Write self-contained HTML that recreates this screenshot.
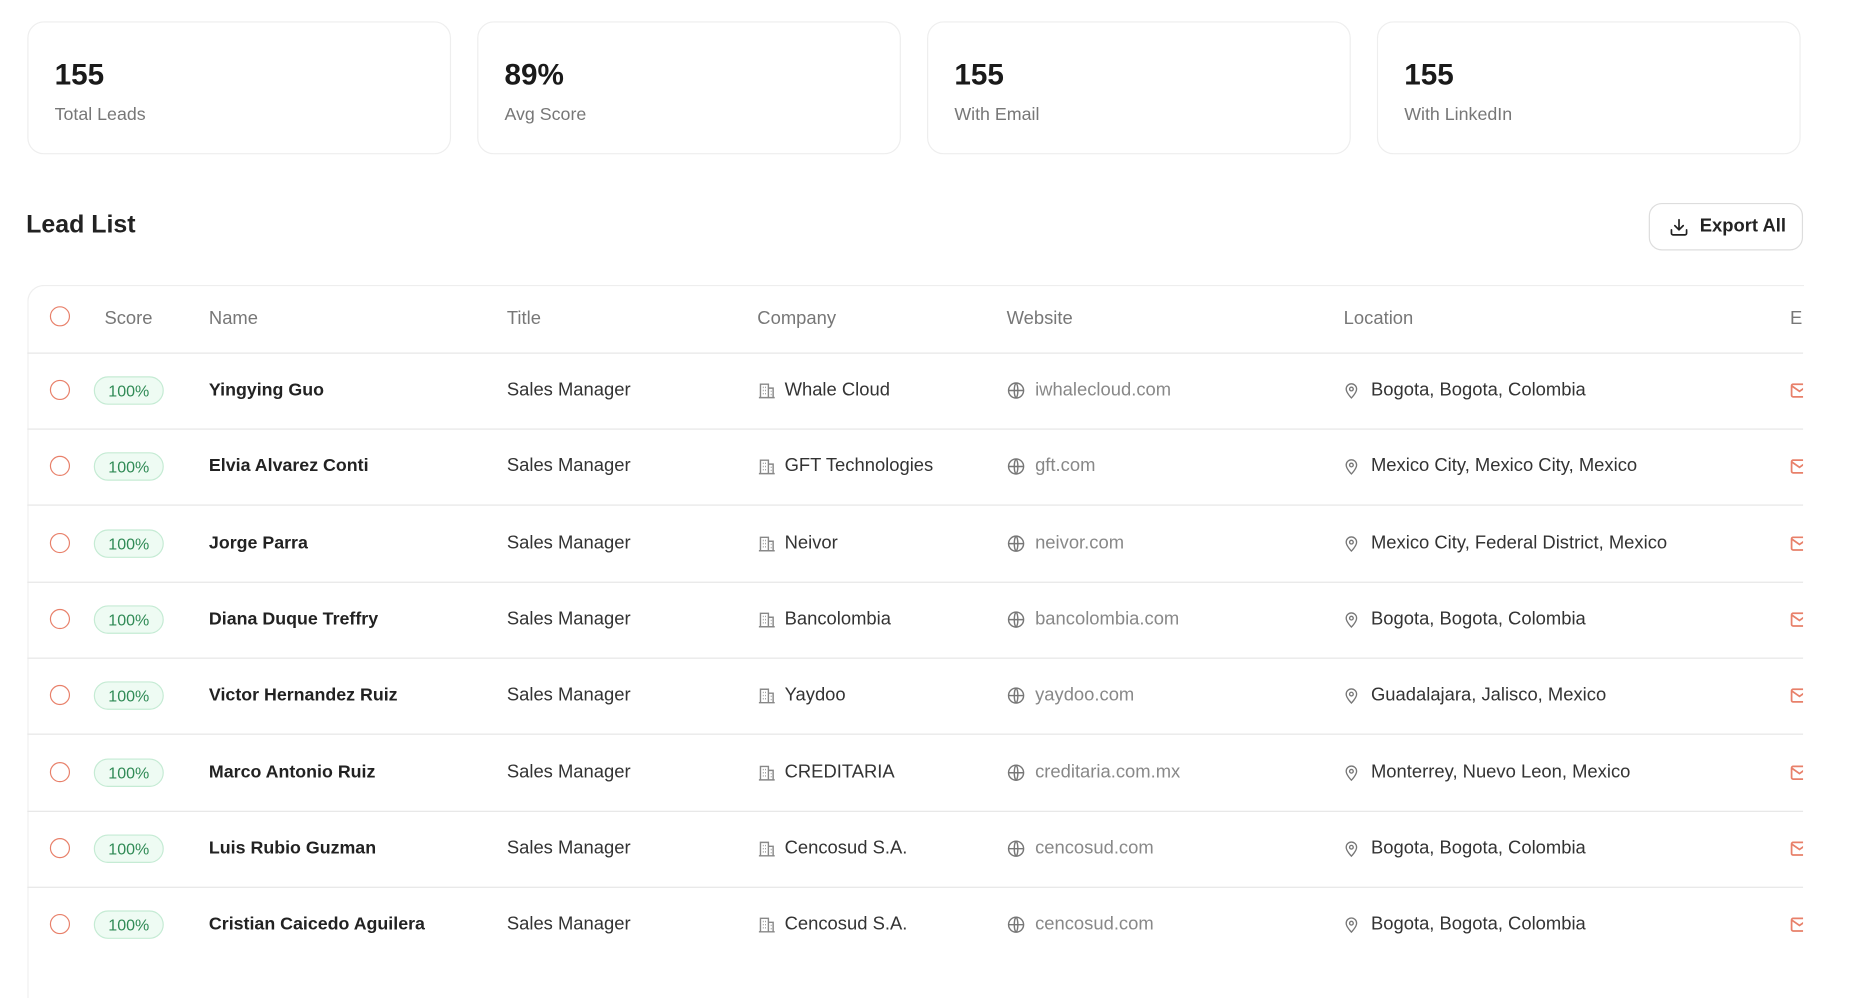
<!DOCTYPE html>
<html><head><meta charset="utf-8"><style>
html,body{margin:0;padding:0;background:#fff;overflow:hidden;width:1858px;height:959px}
#w{position:absolute;left:0;top:0;width:1545px;height:810px;transform:scale(1.187);transform-origin:0 0;font-family:"Liberation Sans",sans-serif;color:#222}
.card{position:absolute;top:18px;height:112px;width:357px;border:1px solid #eee;border-radius:14px;box-sizing:border-box}
.card .n{position:absolute;left:22px;top:44px;font-size:25px;font-weight:600;color:#1a1a1a;line-height:0;}
.card .l{position:absolute;left:22px;top:78px;font-size:15px;color:#777;line-height:0}
.h{position:absolute;left:22px;top:190px;font-size:21px;font-weight:600;line-height:0}
.btn{position:absolute;left:1389px;top:171px;width:130px;height:40px;border:1px solid #ddd;border-radius:11px;box-sizing:border-box;font-size:16px;font-weight:600}
.tbl{position:absolute;left:23px;top:240px;width:1496px;height:600px;border:1px solid #eee;border-right:none;border-bottom:none;border-radius:14px 0 0 0;overflow:hidden}
.t{position:absolute;line-height:0;font-size:15.5px;white-space:nowrap}
.hd{color:#777;font-size:15.5px}
.line{position:absolute;left:23px;width:1496px;height:1px;background:#e6e6e6}
.cb{position:absolute;width:17px;height:17px;border:1.5px solid #e8806a;border-radius:50%;box-sizing:border-box}
.bd{position:absolute;left:79px;width:59px;height:24px;border:1px solid #c5ebd4;background:#eefbf3;border-radius:12px;box-sizing:border-box;color:#2f8a55;font-size:13.5px;text-align:center;line-height:23px}
svg{position:absolute}
</style></head><body><div id="w">
<div class="card" style="left:23px"><div class="n">155</div><div class="l">Total Leads</div></div>
<div class="card" style="left:402px"><div class="n">89%</div><div class="l">Avg Score</div></div>
<div class="card" style="left:781px"><div class="n">155</div><div class="l">With Email</div></div>
<div class="card" style="left:1160px"><div class="n">155</div><div class="l">With LinkedIn</div></div>
<div class="h">Lead List</div>
<div class="btn"><svg style="left:16px;top:11px" width="17" height="17" viewBox="0 0 24 24" fill="none" stroke="#222" stroke-width="2" stroke-linecap="round" stroke-linejoin="round"><path d="M21 15v4a2 2 0 0 1-2 2H5a2 2 0 0 1-2-2v-4M7 10l5 5 5-5M12 15V3"/></svg><span class="t" style="left:42px;top:19px;font-size:15.5px">Export All</span></div>
<div class="tbl"></div>
<div id="rows"></div>
</div>
<script>
var R=document.getElementById('rows');var h='';
h+='<div class="cb" style="left:42px;top:258px"></div>';
[['Score',88],['Name',176],['Title',427],['Company',638],['Website',848],['Location',1132],['Em',1508]].forEach(function(c){h+='<div class="t hd" style="left:'+c[1]+'px;top:269px;'+(c[0]=='Em'?'width:11px;overflow:hidden;line-height:normal;top:260px':'')+'">'+c[0]+'</div>';});
h+='<div class="line" style="top:297px"></div>';
var d=[['Yingying Guo','Whale Cloud','iwhalecloud.com','Bogota, Bogota, Colombia'],['Elvia Alvarez Conti','GFT Technologies','gft.com','Mexico City, Mexico City, Mexico'],['Jorge Parra','Neivor','neivor.com','Mexico City, Federal District, Mexico'],['Diana Duque Treffry','Bancolombia','bancolombia.com','Bogota, Bogota, Colombia'],['Victor Hernandez Ruiz','Yaydoo','yaydoo.com','Guadalajara, Jalisco, Mexico'],['Marco Antonio Ruiz','CREDITARIA','creditaria.com.mx','Monterrey, Nuevo Leon, Mexico'],['Luis Rubio Guzman','Cencosud S.A.','cencosud.com','Bogota, Bogota, Colombia'],['Cristian Caicedo Aguilera','Cencosud S.A.','cencosud.com','Bogota, Bogota, Colombia']];
d.forEach(function(r,i){var y=329+i*64.3;
h+='<div class="cb" style="left:42px;top:'+(y-9)+'px"></div>';
h+='<div class="bd" style="top:'+(y-12)+'px">100%</div>';
h+='<div class="t" style="left:176px;top:'+y+'px;font-weight:600;font-size:15px">'+r[0]+'</div>';
h+='<div class="t" style="left:427px;top:'+y+'px;color:#333">Sales Manager</div>';
h+='<svg style="left:638px;top:'+(y-8)+'px" width="16" height="16" viewBox="0 0 24 24" fill="none" stroke="#888" stroke-width="1.8"><path d="M4 21V4h10v17M14 9h6v12M2 21h20M7 8h1M10 8h1M7 12h1M10 12h1M7 16h1M10 16h1M17 13h1M17 17h1"/></svg>';
h+='<div class="t" style="left:661px;top:'+y+'px;color:#333">'+r[1]+'</div>';
h+='<svg style="left:848px;top:'+(y-8)+'px" width="16" height="16" viewBox="0 0 24 24" fill="none" stroke="#777" stroke-width="1.8"><circle cx="12" cy="12" r="9.5"/><path d="M2.5 12h19M12 2.5c3 3 3 16 0 19M12 2.5c-3 3-3 16 0 19"/></svg>';
h+='<div class="t" style="left:872px;top:'+y+'px;color:#888">'+r[2]+'</div>';
h+='<svg style="left:1131px;top:'+(y-8)+'px" width="15" height="16" viewBox="0 0 24 24" fill="none" stroke="#777" stroke-width="1.8"><path d="M12 22s-7-7-7-12a7 7 0 0 1 14 0c0 5-7 12-7 12z"/><circle cx="12" cy="10" r="2.5"/></svg>';
h+='<div class="t" style="left:1155px;top:'+y+'px;color:#333">'+r[3]+'</div>';
h+='<div style="position:absolute;left:1508px;top:'+(y-7)+'px;width:11px;height:14px;overflow:hidden"><svg style="left:0;top:0" width="16" height="14" viewBox="0 0 24 20" fill="none" stroke="#e8806a" stroke-width="2.2"><rect x="2" y="2" width="20" height="16" rx="2"/><path d="M2 4l10 7 10-7"/></svg></div>';
if(i<7)h+='<div class="line" style="top:'+(y+32)+'px"></div>';
});
R.innerHTML=h;
</script>
</body></html>
